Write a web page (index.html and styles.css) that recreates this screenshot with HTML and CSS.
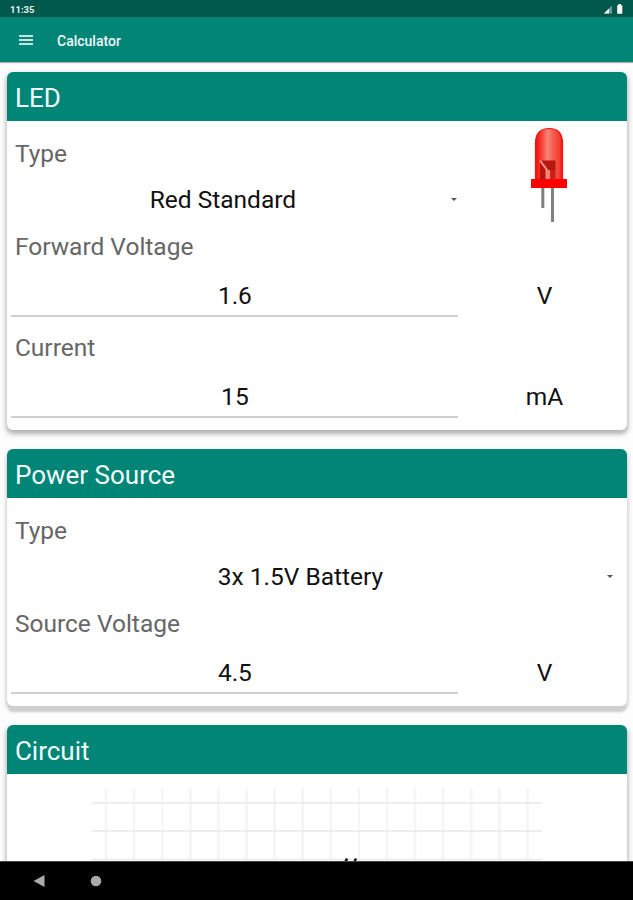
FILE: index.html
```
<!DOCTYPE html>
<html lang="en">
<head>
    <meta charset="UTF-8">
    <title>Calculator</title>
    <link rel="stylesheet" href="styles.css">
</head>
<body>
    <div class="status-bar">
        <span class="clock">11:35</span>
        <svg width="20" height="10" viewBox="0 0 20 10">
            <path d="M0 9.500 8 1.500V9.500Z" fill="#6f9f99"/>
            <path d="M0 9.500 5 4.500V9.500Z" fill="#fff"/>
            <path d="M13.200 1.200H14.500V0H17V1.200H18.300V9.800H13.200Z" fill="#fff"/>
        </svg>
    </div>
    <header class="toolbar">
        <svg class="menu-icon" width="14" height="12" viewBox="0 0 14 12">
            <path d="M0 2H14M0 6H14M0 10H14" stroke="#c5e3df" stroke-width="2"/>
        </svg>
        <h1>Calculator</h1>
    </header>

    <main class="content">
        <section class="card">
            <h2>LED</h2>
            <div class="card-body">
                <div class="led-row">
                    <div class="led-type">
                        <div class="label">Type</div>
                        <div class="spinner">
                            <span class="value">Red Standard</span>
                            <span class="arrow"></span>
                        </div>
                    </div>
                    <svg class="led" width="38" height="96" viewBox="0 0 38 96">
                        <defs>
                            <linearGradient id="bulb" x1="0" x2="1" y1="0" y2="0">
                                <stop offset="0" stop-color="#f50c08"/>
                                <stop offset="0.200" stop-color="#f43a30"/>
                                <stop offset="0.450" stop-color="#f98478"/>
                                <stop offset="0.700" stop-color="#f5564a"/>
                                <stop offset="0.900" stop-color="#f43a30"/>
                                <stop offset="1" stop-color="#f50c08"/>
                            </linearGradient>
                        </defs>
                        <path d="M12.800 60V81M22.500 60V95" stroke="#808080" stroke-width="3"/>
                        <path d="M5.500 53V16C5.500 6 11 1.500 19 1.500S32.500 6 32.500 16V53Z" fill="url(#bulb)" stroke="#f0150f" stroke-width="1.200"/>
                        <path d="M10 34 16 41V52H10ZM11 33.500H25.500V43H18Z" fill="#b81710"/>
                        <path d="M20 43H25.500V52H20Z" fill="#cc2018"/>
                        <path d="M10 33.500 17 43V52" stroke="#f7968a" stroke-width="2" fill="none"/>
                        <path d="M15.500 43H20V52H15.500Z" fill="#f98478"/>
                        <path d="M1 52H37V61H1Z" fill="#fd0000"/>
                    </svg>
                </div>
                <div class="label">Forward Voltage</div>
                <div class="field">
                    <div class="input">1.6</div>
                    <div class="unit">V</div>
                </div>
                <div class="label">Current</div>
                <div class="field">
                    <div class="input">15</div>
                    <div class="unit">mA</div>
                </div>
            </div>
        </section>

        <section class="card power">
            <h2>Power Source</h2>
            <div class="card-body">
                <div class="label">Type</div>
                <div class="spinner">
                    <span class="value">3x 1.5V Battery</span>
                    <span class="arrow"></span>
                </div>
                <div class="label">Source Voltage</div>
                <div class="field">
                    <div class="input">4.5</div>
                    <div class="unit">V</div>
                </div>
            </div>
        </section>

        <section class="card circuit">
            <h2>Circuit</h2>
            <svg class="grid" width="450" height="90" viewBox="0 0 450 90">
                <path d="M14 0V90M42.100 0V90M70.200 0V90M98.300 0V90M126.400 0V90M154.500 0V90M182.600 0V90M210.700 0V90M238.800 0V90M266.900 0V90M295 0V90M323.100 0V90M351.200 0V90M379.300 0V90M407.400 0V90M435.500 0V90" stroke="#f5f5f5" stroke-width="2.500"/>
                <path d="M0 15H450M0 43H450M0 71.500H450" stroke="#e9e9e9" stroke-width="1.600"/>
                <path d="M252 77 255 70.500M261 77 264 70.500" stroke="#111" stroke-width="2.500"/>
            </svg>
        </section>
    </main>

    <nav class="nav-bar">
        <svg width="12" height="12" viewBox="0 0 12 12">
            <path d="M0.500 6 11.500 0V12Z" fill="#aaa"/>
        </svg>
        <svg width="12" height="12" viewBox="0 0 12 12">
            <circle cx="6" cy="6" r="5.300" fill="#aaa"/>
        </svg>
    </nav>
</body>
</html>
```
FILE: styles.css
```
* {
    box-sizing: border-box;
}
body {
    display: flex;
    flex-direction: column;
    height: 900px;
    margin: 0;
    overflow: hidden;
    font-family: Roboto, "Liberation Sans", sans-serif;
    font-size: 24.5px;
    color: #111;
    background-color: #fdfdfd;
}
.status-bar {
    display: flex;
    flex: none;
    align-items: center;
    justify-content: space-between;
    height: 17px;
    padding: 1px 9px 0 10px;
    background-color: #00574b;
}
.clock {
    font-size: 9.5px;
    font-weight: bold;
    color: #e6f2f0;
}
.toolbar {
    display: flex;
    flex: none;
    align-items: center;
    gap: 24px;
    height: 45px;
    padding: 2px 0 0 19px;
    background-color: #008577;
    box-shadow: 0 1px 1px rgba(0, 0, 0, 0.3);
}
.menu-icon {
    margin-bottom: 2px;
}
h1 {
    margin: 0;
    font-size: 14px;
    font-weight: 500;
    color: #f0f8f7;
}
.content {
    display: flex;
    flex: 1;
    flex-direction: column;
    gap: 19px;
    min-height: 0;
    padding: 10px 6.5px 0 7.4px;
    overflow: hidden;
}
.card {
    flex: none;
    background-color: #fff;
    border-radius: 6px;
    box-shadow: 0 3px 5px 1px rgba(0, 0, 0, 0.3);
}
.power {
    box-shadow: 0 7px 2px -1px #cfcfcf, 0 3px 5px rgba(0, 0, 0, 0.3);
}
h2 {
    height: 49px;
    margin: 0;
    padding-left: 7.5px;
    border-radius: 6px 6px 0 0;
    font-size: 26px;
    font-weight: normal;
    line-height: 52px;
    color: #f4fbfa;
    background-color: #008577;
}
.card-body {
    padding-top: 16px;
}
.label {
    height: 32px;
    padding-left: 7.5px;
    line-height: 33px;
    color: #666;
}
.led-row {
    display: flex;
}
.led-type {
    width: 464px;
}
.led {
    margin: -10px 0 -3px 58.6px;
}
.spinner {
    display: flex;
    align-items: center;
    height: 61px;
    padding-right: 14px;
}
.value {
    flex: 1;
    padding-right: 13px;
    text-align: center;
}
.arrow {
    border: 3px solid transparent;
    border-top: 3.5px solid #555;
    border-bottom: 0;
}
.field {
    display: grid;
    grid-template-columns: 455px 1fr;
    height: 69px;
}
.field:last-child {
    height: 67px;
}
.input {
    height: 55px;
    margin: 0 4px;
    padding-top: 14px;
    border-bottom: 2px solid #cfcfcf;
    line-height: 40px;
    text-align: center;
}
.unit {
    padding-top: 14px;
    line-height: 40px;
    text-align: center;
}
.circuit {
    height: 260px;
}
.grid {
    display: block;
    margin: 14px auto 0 85px;
}
.nav-bar {
    display: flex;
    flex: none;
    align-items: center;
    gap: 45px;
    height: 39px;
    padding-left: 33px;
    border-top: 1px solid #444;
    background-color: #000;
}
```
